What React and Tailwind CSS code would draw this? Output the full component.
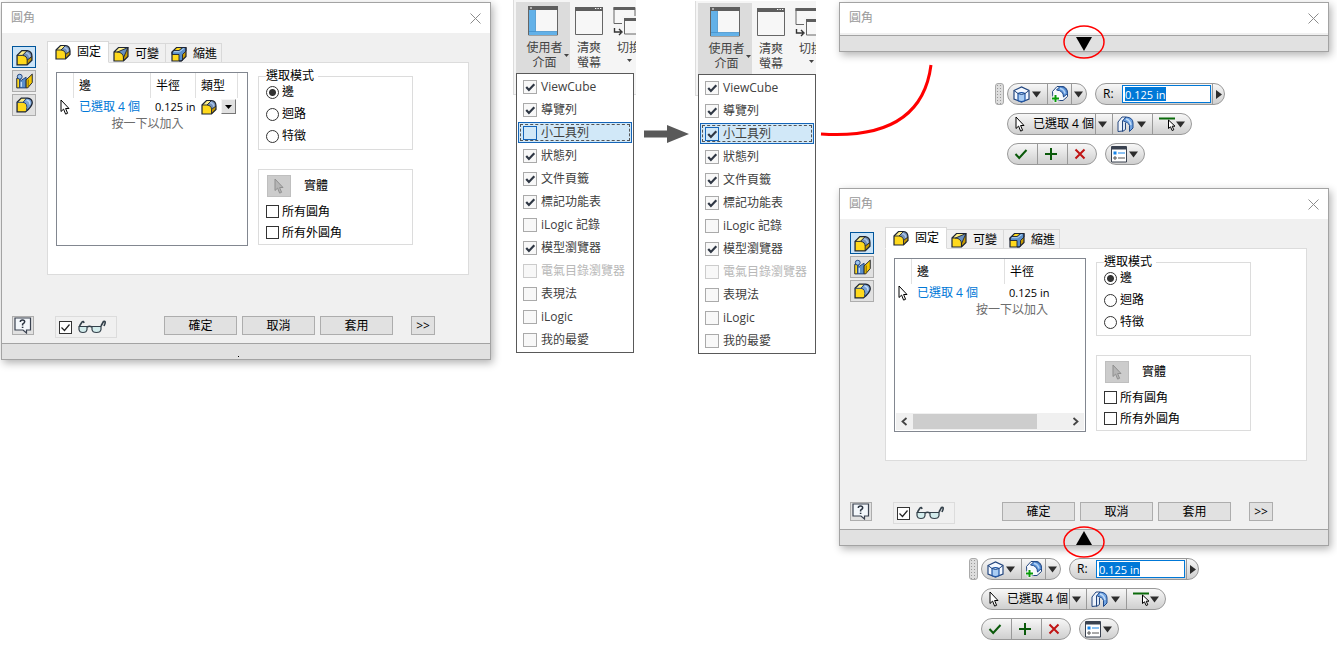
import React, { useId } from 'react'
import clsx from 'clsx'

const menuItems = [
  { label: 'ViewCube', on: true },
  { label: '導覽列', on: true },
  { label: '小工具列', target: true },
  { label: '狀態列', on: true },
  { label: '文件頁籤', on: true },
  { label: '標記功能表', on: true },
  { label: 'iLogic 記錄' },
  { label: '模型瀏覽器', on: true },
  { label: '電氣目錄瀏覽器', disabled: true },
  { label: '表現法' },
  { label: 'iLogic' },
  { label: '我的最愛' },
]

/* ---------- icons ---------- */

const EdgeFilletIcon = ({ className = 'w-4 h-4' }) => (
  <svg viewBox="0 0 16 16" className={className} aria-hidden="true">
    <path d="M1 6 5.500 1.500h5Q15 2 15 7v3.500L10.500 15H1z" fill="#ffd91c" />
    <path d="M1 6 5.500 1.500h5L6 6z" fill="#fff08a" />
    <path d="M6 6 10.500 1.500Q15 2 15 7l-4.500 3.500Q10.500 6.500 6 6z" fill="#7390b8" />
    <path d="M9 3.500q3.500.5 4 4.500" fill="none" stroke="#a9c2e4" strokeWidth="1.500" />
    <path d="M10.500 10.500 15 7v3.500L10.500 15z" fill="#c79a00" />
    <path d="M1 6 5.500 1.500h5Q15 2 15 7v3.500L10.500 15H1z" fill="none" stroke="#1d2433" strokeWidth="1.200" />
    <path d="M1 6h5q4.500.5 4.500 4.500V15M6 6l4.500-4.500M10.500 10.500 15 7" fill="none" stroke="#1d2433" strokeWidth=".9" />
  </svg>
)

const VariableIcon = ({ className = 'w-4 h-4' }) => (
  <svg viewBox="0 0 16 16" className={className} aria-hidden="true">
    <path d="M1 6 5.500 1.500H15v9L10.500 15H1z" fill="#ffd91c" />
    <path d="M1 6 5.500 1.500H14L5 6z" fill="#fff08a" />
    <path d="M10.500 11 15 2v8.500L10.500 15z" fill="#c79a00" />
    <path d="M4.500 6 15 1.500l-4.500 10Q10 6.500 4.500 6z" fill="#6890c0" stroke="#1d2433" strokeWidth=".9" />
    <path d="M1 6 5.500 1.500H15v9L10.500 15H1zM1 6h4M10.500 11v4" fill="none" stroke="#1d2433" strokeWidth="1.200" />
  </svg>
)

const SetbackIcon = ({ className = 'w-4 h-4' }) => (
  <svg viewBox="0 0 16 16" className={className} aria-hidden="true">
    <path d="M1 6 5.500 1.500H15v9L10.500 15H1z" fill="#ffd91c" />
    <path d="M10.500 8 15 3v7.500L10.500 15z" fill="#c79a00" />
    <path d="M1 6 2.500 4.500H8L11.500 1.500H15V5l-3.500 3.500V14l-1 1H8V8.500H1z" fill="#5b8fc9" stroke="#1d2433" strokeWidth=".9" />
    <path d="M2.500 5.700h6L13 2.500" fill="none" stroke="#b5d3f0" />
    <path d="M1 6 5.500 1.500H15v9L10.500 15H1z" fill="none" stroke="#1d2433" strokeWidth="1.200" />
  </svg>
)

const FaceFilletIcon = ({ className = 'w-4 h-4' }) => (
  <svg viewBox="0 0 16 16" className={className} aria-hidden="true">
    <path d="M.700 5h2.800v9H.700z" fill="#ffd91c" stroke="#1d2433" strokeWidth=".9" />
    <path d="M3.500 6Q5 8 7 5.500L9.500 4v10h-6z" fill="#5b8fc9" stroke="#1e3f78" strokeWidth=".9" />
    <path d="M5 8.500V13" stroke="#c3dbf5" strokeWidth="1.300" />
    <path d="M9.500 6.500 15.300 1v8L11 14H9.500z" fill="#f5c800" stroke="#1d2433" strokeWidth=".9" />
    <path d="M11.500 6v7.500" stroke="#8a6a00" />
    <circle cx="3.500" cy="3.500" r="2.300" fill="#9cc4ee" stroke="#1e3f78" strokeWidth=".9" />
  </svg>
)

const FullRoundIcon = ({ className = 'w-4 h-4' }) => (
  <svg viewBox="0 0 16 16" className={className} aria-hidden="true">
    <path d="M1 5 5 1h6q4.300.5 4.300 4.500Q15 9 9 14H1z" fill="#ffd91c" />
    <path d="M1 5 5 1h5L6.500 5z" fill="#fff08a" />
    <path d="M6.500 5 10 1q5.300-.2 5.300 4.500Q15 9 10 13.200 11.800 5.500 6.500 5z" fill="#7aa3d6" />
    <path d="M10 3q3.300.3 3 4" fill="none" stroke="#c3dbf5" strokeWidth="1.300" />
    <path d="M1 5 5 1h6q4.300.5 4.300 4.500Q15 9 9 14H1z" fill="none" stroke="#1d2433" strokeWidth="1.200" />
    <path d="M1 5h5.500Q11.500 5.500 9.800 13M6.500 5 10 1" fill="none" stroke="#1e3f78" strokeWidth=".9" />
  </svg>
)

const CursorIcon = ({ className = 'w-[10px] h-[16px]', fill = '#fff', stroke = '#000' }) => (
  <svg viewBox="0 0 10 16" className={className} aria-hidden="true">
    <path d="M1 1v11.500l2.600-2.400 2 5 2-.8-2-4.800H9z" fill={fill} stroke={stroke} strokeLinejoin="miter" />
  </svg>
)

const GlassesIcon = () => (
  <svg viewBox="0 0 28 14" className="w-7 h-[14px]" aria-hidden="true">
    <path d="M1 6.500h8v3q-.5 3-4 3t-4-3zM14 6.500h9v3q-.5 3-4.500 3T14 9.500z" fill="#d3ecec" stroke="#33404a" strokeWidth="1.200" />
    <path d="M9 7q2.500-1.500 5 0M1.500 6 4 2q1.500-1.500 2 1M23 6l2.500-4.500Q28 .5 26.800 4l-.8 2" fill="none" stroke="#33404a" strokeWidth="1.600" />
  </svg>
)

const HelpIcon = () => (
  <svg viewBox="0 0 18 17" className="w-[18px] h-[17px]" aria-hidden="true">
    <path d="M1 1h15.500v12h-4v3L9 13H1z" fill="#f3f7fb" stroke="#3a4250" strokeWidth="1.200" />
    <path d="M6.300 5q0-2 2.200-2t2.200 1.800Q10.700 6 8.600 7.200V8.500" fill="none" stroke="#2b3442" strokeWidth="1.500" />
    <path d="M7.800 9.700h1.600v1.300H7.800z" fill="#2b3442" />
  </svg>
)

const CloseIcon = () => (
  <svg viewBox="0 0 11 11" className="w-[11px] h-[11px]" aria-hidden="true">
    <path d="M.5.5l10 10M10.500.5l-10 10" stroke="#8c8c8c" fill="none" />
  </svg>
)

const Caret = () => (
  <svg viewBox="0 0 9 7" className="w-[9px] h-[7px] shrink-0" aria-hidden="true">
    <path d="M0 .5h9L4.500 6.500z" fill="#2d2d2d" />
  </svg>
)

const BodyIcon = () => (
  <svg viewBox="0 0 17 17" className="w-[17px] h-[17px]" aria-hidden="true">
    <path d="M1 4.500 8.500 1 16 4.500V13l-7.500 3L1 13z" fill="#f3f8ff" stroke="#24477f" strokeWidth="1.200" />
    <path d="M5 7.500q3.500-2 7 0v7q-3.500 2-7 0z" fill="#a9cdf4" stroke="#1f55a5" strokeWidth="1.200" />
    <path d="M5 7.500q3.500 2 7 0M1 4.500l4 3M16 4.500l-4 3" fill="none" stroke="#24477f" />
  </svg>
)

const AddFilletIcon = () => (
  <svg viewBox="0 0 18 18" className="w-[18px] h-[18px]" aria-hidden="true">
    <path d="M1.500 6.500 6 1.500h6q4.500 1 4.500 7v3L12 15.500H2z" fill="#f6f9fd" stroke="#24477f" />
    <path d="M5.500 5 9 1.500q7 0 7.500 7L12.500 12Q12.500 5.500 5.500 5z" fill="#5f97dc" stroke="#1f4a8c" />
    <path d="M9 3.500q4 .5 5 5" fill="none" stroke="#b5d3f5" strokeWidth="1.500" />
    <path d="M4.500 9.500v8M.5 13.500h8" stroke="#fff" strokeWidth="4" />
    <path d="M4.500 10v7M1 13.500h7" stroke="#0a9a0a" strokeWidth="2" />
  </svg>
)

const FilletTypeIcon = () => (
  <svg viewBox="0 0 17 17" className="w-[17px] h-[17px]" aria-hidden="true">
    <path d="M1 6 5 1h4L5.500 6v9L1 15.500z" fill="#eef3fa" stroke="#24477f" />
    <path d="M5.500 5 9 1q7 .5 7 6v5l-3.500 3.500V9.500Q11.500 6 5.500 5z" fill="#6fa3e2" stroke="#1f4a8c" />
    <path d="M9 3q4 1 5 6" fill="none" stroke="#c3dcf7" strokeWidth="1.500" />
    <path d="M5.500 5v10.500l3-2V6.500" fill="#dfe9f6" stroke="#24477f" />
  </svg>
)

const SelectEdgeIcon = () => (
  <svg viewBox="0 0 17 16" className="w-[17px] h-4" aria-hidden="true">
    <path d="M0 2.500h16" stroke="#0b6b0b" strokeWidth="2" />
    <path d="M9.500 4v8.500l2-1.700 1.600 3.700 1.700-.7-1.600-3.600H16z" fill="#fff" stroke="#000" />
  </svg>
)

const OptionsIcon = () => (
  <svg viewBox="0 0 16 17" className="w-4 h-[17px]" aria-hidden="true">
    <path d="M.5.5h15v15.500H.5z" fill="#fff" stroke="#3a4250" />
    <path d="M1 2h14" stroke="#3a4250" strokeWidth="3" />
    <path d="M2.500 5.500h3v3h-3z" fill="#1684e8" />
    <path d="M7 7h7" stroke="#1684e8" />
    <path d="M3 11h2v2H3z" fill="none" stroke="#555" />
    <path d="M7 12h7" stroke="#555" />
  </svg>
)

/* ---------- form bits ---------- */

const Check = ({ label, boxClass, textClass, tick = 'thin', hideLabel, ...props }) => {
  const id = useId()
  return (
    <>
      <span className="relative inline-flex shrink-0">
        <input id={id} type="checkbox" aria-label={hideLabel ? label : undefined} className={clsx('peer appearance-none border', boxClass)} {...props} />
        <svg viewBox="0 0 13 13" className="absolute inset-0 w-full h-full pointer-events-none opacity-0 peer-checked:opacity-100" aria-hidden="true">
          {tick === 'thin'
            ? <path d="M2.500 6.500l3 3 5-6" fill="none" stroke="#222" strokeWidth="1.200" />
            : <path d="M3 6.500l2.500 2.800L10.500 4" fill="none" stroke="#2f3744" strokeWidth="2" />}
        </svg>
      </span>
      {!hideLabel && <label htmlFor={id} className={textClass}>{label}</label>}
    </>
  )
}

const Radio = ({ label, name, ...props }) => {
  const id = useId()
  return (
    <div className="flex items-center gap-[3px] h-[22px]">
      <input
        id={id}
        type="radio"
        name={name}
        className="appearance-none w-[13px] h-[13px] rounded-full border border-[#333] bg-white checked:bg-[radial-gradient(#333_0_3px,#fff_4px)]"
        {...props}
      />
      <label htmlFor={id}>{label}</label>
    </div>
  )
}

const dialogButton = 'h-[19px] bg-[#e1e1e1] border border-[#adadad] flex items-center justify-center leading-none'

/* ---------- dialog ---------- */

const TitleBar = () => (
  <header className="h-[30px] pl-[9px] pr-[9px] bg-white flex items-center justify-between">
    <h2 className="text-[#999]">圓角</h2>
    <button type="button" aria-label="關閉"><CloseIcon /></button>
  </header>
)

const StatusBar = ({ marker }) => (
  <footer className="h-4 bg-[#e1e1e1] border-t border-[#a3a3a3] flex justify-center items-center">
    {!marker && <span className="w-px h-px bg-black mr-4 mt-[10px]" />}
    {marker && (
      <button type="button" aria-label={marker === 'down' ? '展開' : '收合'} className="relative w-4 h-[14px]">
        <svg viewBox="0 0 44 44" className="absolute w-11 h-11 left-1/2 top-1/2 -translate-x-1/2 -translate-y-1/2 z-10 max-w-none">
          <path d={marker === 'down' ? 'M14 15h16L22 29z' : 'M14 29h16L22 15z'} fill="#000" />
          <ellipse cx="22" cy={marker === 'down' ? 20 : 26} rx="20" ry={marker === 'down' ? 16 : 15} fill="none" stroke="#f00" strokeWidth="1.500" />
        </svg>
      </button>
    )}
  </footer>
)

const windowFrame = 'border border-[#a3a3a3] shadow-[2px_3px_8px_rgba(0,0,0,0.3)]'

const sideIcons = [EdgeFilletIcon, FaceFilletIcon, FullRoundIcon]
const sideLabels = ['邊圓角', '面圓角', '全圓圓角']

const EdgeTable = ({ wide }) => {
  const head = 'font-normal text-left align-middle border-r border-[#e0e0e0] h-[25px] pl-[5px] py-0 pr-0'
  return (
    <div className="w-[192px] h-[174px] mt-[2px] border border-[#828790] bg-white flex flex-col justify-between overflow-hidden">
      <table className={clsx('table-fixed border-separate border-spacing-0', wide ? 'w-[234px]' : 'w-[181px]')}>
        <colgroup>
          <col className="w-[17px]" />
          <col className={wide ? 'w-[93px]' : 'w-[77px]'} />
          <col className={wide ? 'w-[124px]' : 'w-[45px]'} />
          {!wide && <col className="w-[42px]" />}
        </colgroup>
        <thead>
          <tr>
            <th className={head} />
            <th className={head}>邊</th>
            <th className={head}>半徑</th>
            {!wide && <th className={head}>類型</th>}
          </tr>
        </thead>
        <tbody>
          <tr className="h-[17px]">
            <td className="p-0 pl-[3px]"><CursorIcon /></td>
            <td className="p-0 pl-[5px] text-[#0078d7] whitespace-nowrap">已選取 4 個</td>
            <td className="p-0 pl-1 text-[11px] whitespace-nowrap">0.125 in</td>
            {!wide && (
              <td className="p-0 pl-[5px]">
                <div className="flex items-center gap-1">
                  <EdgeFilletIcon />
                  <button type="button" aria-label="類型" className="w-[15px] h-[15px] shrink-0 bg-[#e1e1e1] border border-[#f5f5f5] border-r-[#777] border-b-[#777] flex items-center justify-center">
                    <svg viewBox="0 0 7 4" className="w-[7px] h-1"><path d="M0 0h7L3.500 4z" /></svg>
                  </button>
                </div>
              </td>
            )}
          </tr>
          <tr className="h-[18px]">
            <td colSpan={wide ? 3 : 4} className="p-0 text-center text-[#6d6d6d]">按一下以加入</td>
          </tr>
        </tbody>
      </table>
      {wide && (
        <div className="h-[17px] mx-px mb-px bg-[#f0f0f0] flex items-center shrink-0">
          <svg viewBox="0 0 17 15" className="w-[17px] h-[15px]"><path d="M10.500 4 6.500 7.500l4 3.500" fill="none" stroke="#444" strokeWidth="1.800" /></svg>
          <div className="w-[124px] h-[15px] bg-[#cdcdcd]" />
          <svg viewBox="0 0 17 15" className="ml-auto w-[17px] h-[15px]"><path d="M6.500 4l4 3.500-4 3.500" fill="none" stroke="#444" strokeWidth="1.800" /></svg>
        </div>
      )}
    </div>
  )
}

const FilletDialog = ({ wide, marker }) => {
  const group = useId()
  const box = 'w-[13px] h-[13px] bg-white border-[#333]'
  const tab = 'flex items-center gap-[6px] border border-[#d9d9d9]'
  return (
    <section className={clsx('w-full bg-[#f0f0f0]', windowFrame)}>
      <TitleBar />
      <div className="pt-2 pl-[10px]">
        <div className="flex gap-[11px] pr-[21px]">
          <div className="flex flex-col gap-[2px] pt-[5px]">
            {sideIcons.map((Icon, i) => (
              <button
                key={sideLabels[i]}
                type="button"
                aria-label={sideLabels[i]}
                className={clsx('w-6 h-[22px] border flex items-center justify-center', i === 0 ? 'bg-[#cce4f7] border-[#00559b]' : 'bg-[#e1e1e1] border-[#adadad]')}
              >
                <Icon className="w-[17px] h-[17px]" />
              </button>
            ))}
          </div>

          <div className="flex-1 min-w-0">
            <div role="tablist" className="flex items-end h-[21px]">
              <button role="tab" aria-selected="true" type="button" className={clsx(tab, 'relative z-10 w-[62px] h-[22px] -mb-px pl-[7px] border-b-white bg-white')}>
                <EdgeFilletIcon />固定
              </button>
              <button role="tab" aria-selected="false" type="button" className={clsx(tab, 'w-[57px] h-[19px] pl-1 pt-px border-l-0 border-b-0')}>
                <VariableIcon />可變
              </button>
              <button role="tab" aria-selected="false" type="button" className={clsx(tab, 'w-[56px] h-[19px] pl-[5px] pt-px border-l-0 border-b-0')}>
                <SetbackIcon />縮進
              </button>
            </div>

            <div role="tabpanel" className="bg-white border border-[#dcdcdc] pt-[7px] pl-2 pb-[28px] flex gap-[10px]">
              <EdgeTable wide={wide} />

              <div className="w-[155px] flex flex-col gap-[19px]">
                <fieldset className="border border-[#dcdcdc] pl-[7px] pb-[2px]">
                  <legend className="leading-[12px] pr-1">選取模式</legend>
                  <div className="-mt-px">
                    <Radio label="邊" name={group} defaultChecked />
                    <Radio label="迴路" name={group} />
                    <Radio label="特徵" name={group} />
                  </div>
                </fieldset>
                <div className="border border-[#dcdcdc] pl-[7px] pt-[5px] pb-px">
                  <div className="flex items-center gap-[13px] pl-px mb-1">
                    <button type="button" disabled aria-label="選取實體" className="w-6 h-[22px] bg-[#ccc] border border-[#bfbfbf] flex items-center justify-center">
                      <CursorIcon fill="#b5b5b5" stroke="#8f8f8f" />
                    </button>
                    <span>實體</span>
                  </div>
                  <div className="flex items-center gap-[3px] h-[21px]"><Check label="所有圓角" boxClass={box} /></div>
                  <div className="flex items-center gap-[3px] h-[21px]"><Check label="所有外圓角" boxClass={box} /></div>
                </div>
              </div>
            </div>
          </div>
        </div>

        <div className="flex items-start mt-[41px] pb-[5px] pr-[55px]">
          <button type="button" aria-label="說明" className={clsx(dialogButton, 'w-[22px] mr-[21px]')}><HelpIcon /></button>
          <div className="w-[62px] h-[22px] border border-[#dcdcdc] pl-[3px] flex items-center gap-[6px]">
            <Check label="預覽" hideLabel boxClass={box} defaultChecked />
            <GlassesIcon />
          </div>
          <div className="flex gap-[5px] ml-auto">
            <button type="button" className={clsx(dialogButton, 'w-[73px]')}>確定</button>
            <button type="button" className={clsx(dialogButton, 'w-[73px]')}>取消</button>
            <button type="button" className={clsx(dialogButton, 'w-[73px]')}>套用</button>
          </div>
          <button type="button" className={clsx(dialogButton, 'w-6 ml-[18px]')}>&gt;&gt;</button>
        </div>
      </div>
      <StatusBar marker={marker} />
    </section>
  )
}

const CollapsedDialog = () => (
  <section className={clsx('w-full bg-[#f0f0f0]', windowFrame)}>
    <TitleBar />
    <div className="pt-[2px]"><StatusBar marker="down" /></div>
  </section>
)

/* ---------- ribbon + drop-down ---------- */

const Ribbon = ({ checked, className }) => (
  <section className={clsx('relative h-[95px] shrink-0 bg-[#f5f5f5] border-l border-b border-[#dcdcdc]', className)}>
    <div className="flex overflow-hidden pl-[2px] pt-[2px] h-full text-[#444] leading-[15px]">
      <button type="button" className="relative w-[54px] h-[71px] shrink-0 bg-[#dcdcdc] flex flex-col items-center pt-1">
        <svg viewBox="0 0 30 30" className="w-[30px] h-[30px] mb-1 shrink-0" aria-hidden="true">
          <path d="M.5.5h29v28.500H.5z" fill="#f7f7f7" stroke="#666" />
          <path d="M1 4h6.500v21.500H29V29H1z" fill="#63b1e8" />
          <path d="M7.500 4v21.500M1 25.500h28" stroke="#3c8cc8" strokeWidth=".7" />
          <path d="M0 0h30v4H0z" fill="#5e5e5e" />
          <path d="M2 1.500h2v1H2z" fill="#fff" />
        </svg>
        <span className="pl-[3px]">使用者</span>
        <span className="pl-[3px]">介面</span>
        <svg viewBox="0 0 5 3" className="absolute right-[1px] top-[52px] w-[5px] h-[3px]"><path d="M0 0h5L2.500 3z" fill="#444" /></svg>
      </button>
      <button type="button" className="w-[38px] shrink-0 flex flex-col items-center pt-1">
        <svg viewBox="0 0 28 30" className="w-7 h-[30px] mb-1 shrink-0" aria-hidden="true">
          <path d="M.5 1.500h27v27H.5z" fill="#f7f7f7" stroke="#666" />
          <path d="M0 1h28v4H0z" fill="#5e5e5e" />
          <path d="M20 2.500h1.300M22.500 2.500h1.300M25 2.500h1.300" stroke="#fff" strokeWidth="1.200" />
        </svg>
        <span>清爽</span>
        <span>螢幕</span>
      </button>
      <button type="button" className="w-[42px] shrink-0 flex flex-col items-center pt-1">
        <svg viewBox="0 0 32 30" className="w-8 h-[30px] mb-1 shrink-0" aria-hidden="true">
          <path d="M1 1.500h21v16H1z" fill="#f7f7f7" stroke="#666" />
          <path d="M.5 1H22v3H.5z" fill="#5e5e5e" />
          <path d="M9 10h23v20H9z" fill="#f5f5f5" />
          <path d="M11.500 12.500h19V28h-19z" fill="#f7f7f7" stroke="#666" />
          <path d="M11 12h20v3H11z" fill="#5e5e5e" />
          <path d="M1.500 22v4H8M6 23l3 3-3 3" fill="none" stroke="#333" strokeWidth="1.400" />
        </svg>
        <span>切換</span>
        <svg viewBox="0 0 5 3" className="w-[5px] h-[3px] mt-1"><path d="M0 0h5L2.500 3z" fill="#444" /></svg>
      </button>
    </div>

    <ul className="absolute left-[2px] top-[73px] w-[118px] border border-[#595959] bg-white pt-[2px] pb-[2px] px-px flex flex-col gap-[2px] z-10">
      {menuItems.map((item) => (
        <li
          key={item.label}
          className={clsx('h-[21px] px-[5px] flex items-center gap-1 relative', item.target ? 'bg-[#d1e8f8] outline outline-1 -outline-offset-1 outline-[#1565b8]' : '')}
        >
          {item.target && <span className="absolute inset-[2px] border border-dashed border-[#555] pointer-events-none" />}
          <Check
            label={item.label}
            tick="bold"
            disabled={item.disabled}
            defaultChecked={item.target ? checked : item.on}
            boxClass={clsx('w-[14px] h-[14px]', item.target ? 'border-[#1565b8]' : item.disabled ? 'border-[#ccc] bg-[#f8f8f8]' : 'border-[#aaa] bg-[#f8f8f8]')}
            textClass={clsx('whitespace-nowrap pt-px', item.disabled ? 'text-[#b8b8b8]' : 'text-[#404040]')}
          />
        </li>
      ))}
    </ul>
  </section>
)

/* ---------- mini toolbar ---------- */

const Pill = ({ children }) => (
  <div className="h-[22px] rounded-full border border-[#999] bg-linear-to-b from-[#f7f7f7] to-[#cfcfcf] flex overflow-hidden divide-x divide-[#999]">
    {children}
  </div>
)

const Seg = ({ className, label, children }) => (
  <button type="button" aria-label={label} className={clsx('flex items-center justify-center', className)}>{children}</button>
)

const MiniToolbar = ({ className }) => {
  const id = useId()
  return (
    <div className={clsx('w-[230px] flex flex-col gap-2', className)}>
      <div className="flex">
        <div className="w-[9px] h-[22px] mr-[3px] rounded-[3px] border border-[#aaa] bg-[#ddd] bg-[radial-gradient(#999_0.7px,transparent_1px)] bg-[length:3px_3px]" />
        <Pill>
          <Seg label="實體" className="w-[40px] gap-[2px] pr-[2px]"><BodyIcon /><Caret /></Seg>
          <Seg label="加入圓角" className="w-[24px]"><AddFilletIcon /></Seg>
          <Seg label="更多圓角" className="w-[14px] pr-[2px]"><Caret /></Seg>
        </Pill>
        <div className="w-2" />
        <Pill>
          <div className="w-[117px] pl-[7px] flex items-center">
            <label htmlFor={id} className="w-[19px]">R:</label>
            <input
              id={id}
              type="text"
              defaultValue="0.125 in"
              className="w-[89px] h-[18px] pl-[2px] border border-[#0078d7] outline-none bg-white text-white text-[11px] bg-[linear-gradient(#0078d7,#0078d7)] bg-[length:41px_14px] bg-[position:2px_1px] bg-no-repeat"
            />
          </div>
          <Seg label="更多" className="w-[11px]">
            <svg viewBox="0 0 6 9" className="w-[6px] h-[9px]"><path d="M0 0v9l6-4.500z" fill="#2d2d2d" /></svg>
          </Seg>
        </Pill>
      </div>
      <div className="flex pl-3">
        <Pill>
          <Seg className="w-[88px] gap-2 pl-[6px] whitespace-nowrap"><CursorIcon />已選取 4 個</Seg>
          <Seg label="選取集" className="w-[17px] pr-[4px]"><Caret /></Seg>
          <Seg label="圓角類型" className="w-[40px] gap-[3px] pr-[2px]"><FilletTypeIcon /><Caret /></Seg>
          <Seg label="選取模式" className="w-[38px]"><SelectEdgeIcon /><Caret /></Seg>
        </Pill>
      </div>
      <div className="flex gap-2 pl-3">
        <Pill>
          <Seg label="確定" className="w-[30px] pr-[4px]">
            <svg viewBox="0 0 14 12" className="w-[14px] h-3"><path d="M1.500 6l3.700 4L12.500 2" fill="none" stroke="#0b5a0b" strokeWidth="2" /></svg>
          </Seg>
          <Seg label="套用" className="w-[30px] pr-[4px]">
            <svg viewBox="0 0 12 12" className="w-3 h-3"><path d="M6 0v12M0 6h12" stroke="#0b5a0b" strokeWidth="2" /></svg>
          </Seg>
          <Seg label="取消" className="w-[28px] pr-[4px]">
            <svg viewBox="0 0 12 12" className="w-3 h-3"><path d="M1.500 1.500l9 9M10.500 1.500l-9 9" stroke="#c01414" strokeWidth="2" /></svg>
          </Seg>
        </Pill>
        <Pill>
          <Seg label="選項" className="w-[38px] gap-[2px] pr-[2px]"><OptionsIcon /><Caret /></Seg>
        </Pill>
      </div>
    </div>
  )
}

const App = () => {
  return (
    <main className="min-h-screen bg-white pl-px pr-2 flex items-start overflow-hidden text-[12px] leading-[16px] text-black font-['Open_Sans','Noto_Sans_CJK_TC',sans-serif]">
      <div className="flex-1 min-w-[490px] pt-[2px]">
        <FilletDialog />
      </div>

      <Ribbon className="w-[123px] ml-[22px]" />

      <svg viewBox="0 0 46 20" className="w-[46px] h-5 shrink-0 mt-[124px] ml-2 mr-[5px]" aria-hidden="true">
        <path d="M0 6.500h23V1l22 9-22 9v-5.500H0z" fill="#595959" />
      </svg>

      <Ribbon checked className="w-[121px] mt-px" />

      <div className="relative flex-1 min-w-[490px] ml-[23px] pt-[2px] flex flex-col items-center">
        <svg viewBox="0 0 114 76" className="absolute -left-5 top-[62px] w-[114px] h-[76px]" aria-hidden="true">
          <path d="M2 72C62 76 105 58 112 3" fill="none" stroke="#f00" strokeWidth="3" />
        </svg>
        <CollapsedDialog />
        <MiniToolbar className="mt-[31px] ml-[52px]" />
        <div className="w-full mt-[23px]">
          <FilletDialog wide marker="up" />
        </div>
        <MiniToolbar className="mt-3" />
      </div>
    </main>
  )
}

export default App
